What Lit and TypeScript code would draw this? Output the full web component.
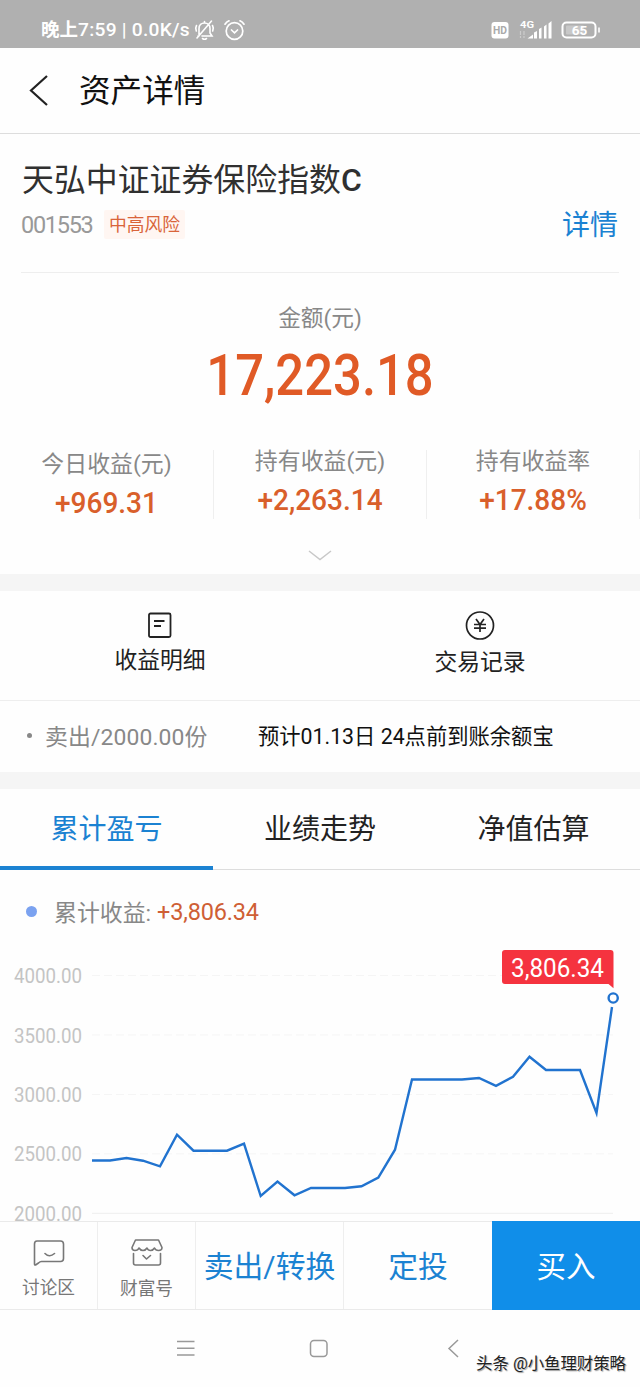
import { LitElement, html, svg, css } from "lit";
import { customElement } from "lit/decorators.js";

const TREND: [number, number][] = [
  [92, 1160.5], [110, 1160.5], [126.5, 1158], [143, 1160.7], [160, 1166.3], [177, 1134.7],
  [193.5, 1150.7], [227, 1150.7], [244, 1143.7], [260.7, 1196], [277.5, 1181.5], [294.5, 1195.3],
  [311, 1188], [345, 1188], [361.5, 1186.3], [378.3, 1177.5], [395, 1149.7], [412, 1079.5],
  [462, 1079.5], [479, 1078], [496, 1085.8], [513, 1076.8], [529.5, 1056.7], [546, 1070],
  [580, 1070], [596.5, 1113], [612, 1007],
];
const TICKS = [
  { label: "4000.00", y: 975.5 },
  { label: "3500.00", y: 1035 },
  { label: "3000.00", y: 1094.5 },
  { label: "2500.00", y: 1153.8 },
  { label: "2000.00", y: 1213.3 },
];

@customElement("status-bar")
class StatusBar extends LitElement {
  static styles = css`
    :host { display: flex; height: 48px; background: #b0b0b0; color: #fff; box-sizing: border-box; padding: 13px 39px 0 41px; justify-content: space-between; align-items: flex-start; }
    .left, .right { display: flex; align-items: center; height: 34px; }
    .time { font-size: 19.2px; font-weight: 500; line-height: 34px; white-space: pre; letter-spacing: 0.25px; }
    .cjk { font-size: 18.5px; letter-spacing: 0; font-weight: 600; }
    .mute { margin-left: 4px; }
    .alarm { margin-left: 9px; }
    svg { display: block; }
  `;
  render() {
    return html`
      <div class="left">
        <span class="time"><span class="cjk">晚上</span>7:59 | 0.0K/s</span>
        <svg class="mute" width="21" height="22" viewBox="0 0 21 22" fill="none" stroke="#fff" stroke-width="1.6" stroke-linecap="round">
          <path d="M5 15.500V9.500C5 6 7.500 4 10.500 4s5.500 2 5.500 5.500v4.500l2 3H8M4 17h1M10.500 4V2.500M8.500 19.500q2 1.500 4 0M3 19L17.500 2M2.500 6.500Q1 9 2.300 12M18.500 6.500Q20 9 18.700 12"/>
        </svg>
        <svg class="alarm" width="21" height="22" viewBox="0 0 21 22" fill="none" stroke="#fff" stroke-width="1.7" stroke-linecap="round">
          <circle cx="10.500" cy="12" r="8.300"/>
          <path d="M7.500 11l3 2.800 3-2.800M1 5.200Q2.500 2.800 5 1.800M20 5.200Q18.500 2.800 16 1.800"/>
        </svg>
      </div>
      <div class="right">
        <svg width="110" height="24" viewBox="0 0 110 24">
          <rect x="0.500" y="4" width="17" height="16.500" rx="3" fill="#fff"/>
          <text x="9" y="16.300" font-size="11" font-weight="700" fill="#aaa" text-anchor="middle" textLength="14" lengthAdjust="spacingAndGlyphs">HD</text>
          <text x="29" y="9.500" font-size="9.800" font-weight="700" fill="#fff" textLength="14" lengthAdjust="spacingAndGlyphs">4G</text>
          <path d="M29.500 13v7M33 13v7" stroke="#ccc" stroke-width="1.200" stroke-dasharray="4 1"/>
          <path d="M36.500 20.500l5.500-4v4zM43 20.500v-6l3-1.500v7.500zM48 20.500v-9.500l2.500-1.500v11zM53 20.500V8.500l2.500-2v14zM57.500 20.500V5.500l3-2.500v17.500z" fill="#fff"/>
          <rect x="71.500" y="4.500" width="33" height="15" rx="4" fill="none" stroke="#fff" stroke-width="2"/>
          <rect x="75" y="7.500" width="18" height="9" rx="1" fill="#c8c8c8"/>
          <path d="M108 9.500v5" stroke="#eee" stroke-width="2"/>
          <text x="88.500" y="16.800" font-size="13.500" font-weight="700" fill="#fff" text-anchor="middle">65</text>
        </svg>
      </div>`;
  }
}

@customElement("fund-summary")
class FundSummary extends LitElement {
  static styles = css`
    :host { display: block; height: 440px; box-sizing: border-box; padding-top: 23px; }
    .name { margin-left: 22px; font-size: 31.9px; line-height: 46px; color: #303030; white-space: nowrap; }
    .name b { font-weight: 500; }
    .meta { display: flex; align-items: center; height: 43px; margin: 0 22px 0 21px; }
    .code { font-size: 23.5px; color: #999; width: 83px; white-space: nowrap; letter-spacing: -1.3px; }
    .tag { background: #fff6f2; color: #d9643a; font-size: 17.8px; line-height: 29px; padding: 0 5px; border-radius: 2px; margin-top: -1px; }
    .more { margin-left: auto; font-size: 28px; color: #1b82d2; padding-bottom: 3px; }
    .rule { height: 1px; background: #eee; margin: 26px 21px 0; }
    .label { text-align: center; font-size: 22.7px; line-height: 34px; color: #888; margin-top: 29px; }
    .amount { text-align: center; font-size: 58px; line-height: 70px; font-weight: 500; color: #e05a26; margin-top: 4px; transform: scaleX(0.875); }
    .cols { display: grid; grid-template-columns: 214px 213px 213px; margin-top: 40px; height: 67px; }
    .col { border-right: 1px solid #efefef; text-align: center; white-space: nowrap; }
    .k { font-size: 22.9px; line-height: 28px; color: #888; margin-top: -2px; }
    .v { font-size: 29.5px; line-height: 38px; color: #d95f2b; margin-top: 5px; transform: scaleX(0.95); font-weight: 500; }
    .low { position: relative; top: 3px; }
    .arrow { display: block; margin: 32px auto 0; }
  `;
  render() {
    const cols = [
      { k: "今日收益(元)", v: "+969.31", low: true },
      { k: "持有收益(元)", v: "+2,263.14", low: false },
      { k: "持有收益率", v: "+17.88%", low: false },
    ];
    return html`
      <div class="name">天弘中证证券保险指数<b>C</b></div>
      <div class="meta"><span class="code">001553</span><span class="tag">中高风险</span><span class="more">详情</span></div>
      <div class="rule"></div>
      <div class="label">金额(元)</div>
      <div class="amount">17,223.18</div>
      <div class="cols">
        ${cols.map((c) => html`<div class="col"><div class=${c.low ? "low" : ""}><div class="k">${c.k}</div><div class="v">${c.v}</div></div></div>`)}
      </div>
      <svg class="arrow" width="24" height="12" viewBox="0 0 24 12" fill="none" stroke="#c8c8c8" stroke-width="1.500"><path d="M1 2l11 8.500L23 2"/></svg>`;
  }
}

@customElement("fund-actions")
class FundActions extends LitElement {
  static styles = css`
    :host { display: block; border-top: 17px solid #f5f5f5; border-bottom: 17px solid #f5f5f5; }
    .pair { display: grid; grid-template-columns: 1fr 1fr; height: 109px; border-bottom: 1px solid #eee; }
    .item { display: flex; flex-direction: column; align-items: center; padding-top: 19px; font-size: 22.8px; line-height: 32px; color: #222; gap: 5px; }
    .item.r { gap: 7px; }
    .order { display: flex; align-items: center; height: 71px; white-space: nowrap; }
    .bullet { width: 5px; height: 5px; border-radius: 50%; background: #888; margin-left: 27px; margin-bottom: 2px; }
    .sell { color: #888; font-size: 22.9px; margin-left: 13px; width: 213px; letter-spacing: 0.1px; padding-bottom: 4px; }
    .eta { color: #111; font-size: 21.3px; padding-bottom: 4px; }
  `;
  render() {
    return html`
      <div class="pair">
        <div class="item">
          <svg width="30" height="30" viewBox="0 0 30 30" fill="none" stroke="#222" stroke-width="1.800"><rect x="4" y="3.500" width="21.500" height="23.500" rx="1.500"/><path d="M9 11h10.500M9 16h7"/></svg>
          收益明细
        </div>
        <div class="item r">
          <svg width="30" height="30" viewBox="0 0 30 30" fill="none" stroke="#222" stroke-width="1.700"><circle cx="15" cy="15.500" r="13.500"/><path d="M11 9l4 5.500 4-5.500M9 14.500h12M9 18.200h12M15 14.500v7.500"/></svg>
          交易记录
        </div>
      </div>
      <div class="order"><span class="bullet"></span><span class="sell">卖出/2000.00份</span><span class="eta">预计01.13日 24点前到账余额宝</span></div>`;
  }
}

@customElement("profit-chart")
class ProfitChart extends LitElement {
  static styles = css`
    :host { display: block; height: 432px; }
    .tabs { display: grid; grid-template-columns: 213px 214px 213px; height: 81px; box-sizing: border-box; border-bottom: 1px solid #ddd; }
    .tab { text-align: center; font-size: 28px; line-height: 81px; height: 77px; color: #222; }
    .on { color: #1b82d2; border-bottom: 4px solid #1b82d2; }
    .legend { display: flex; align-items: center; height: 84px; padding-left: 26px; font-size: 22.9px; color: #888; white-space: pre; }
    .dot { width: 11px; height: 11px; border-radius: 50%; background: #7ba2f0; margin-right: 17px; margin-bottom: 1px; }
    .key { padding-bottom: 3px; }
    .num { color: #cf5f35; margin-left: 6px; font-size: 23.5px; letter-spacing: -0.2px; padding-bottom: 1px; }
    svg { display: block; margin-top: -14px; overflow: visible; }
  `;
  render() {
    return html`
      <div class="tabs"><div class="tab on">累计盈亏</div><div class="tab">业绩走势</div><div class="tab">净值估算</div></div>
      <div class="legend"><span class="dot"></span><span class="key">累计收益:</span><span class="num">+3,806.34</span></div>
      <svg width="640" height="281" viewBox="0 940 640 281">
        ${TICKS.map((t, i) => svg`
          <line x1="92" x2="613" y1=${t.y} y2=${t.y} stroke=${i === 4 ? "#eeeeee" : "#f5f5f5"} stroke-dasharray=${i === 4 ? "none" : "8 4"}/>
          <text x="14" y=${t.y + 7.5} font-size="20.500" fill="#c4c4c4" textLength="68" lengthAdjust="spacingAndGlyphs">${t.label}</text>`)}
        <polyline points=${TREND.map((p) => p.join(",")).join(" ")} fill="none" stroke="#2173cf" stroke-width="2.400"/>
        <circle cx="613.200" cy="998" r="4.600" fill="#fff" stroke="#2173cf" stroke-width="2.400"/>
        <path d="M505 950h105.500q3 0 3 3v35.300l-5-4.300H505q-3 0-3-3v-28q0-3 3-3z" fill="#f5333f"/>
        <text x="511" y="977" font-size="25" fill="#fff" textLength="93" lengthAdjust="spacingAndGlyphs">3,806.34</text>
      </svg>`;
  }
}

@customElement("trade-bar")
class TradeBar extends LitElement {
  static styles = css`
    :host { display: grid; grid-template-columns: 98px 98px 148px 148px 148px; height: 89px; box-sizing: border-box; border-top: 1px solid #eaeaea; border-bottom: 1px solid #eaeaea; }
    .cell { border-right: 1px solid #eee; display: flex; align-items: center; justify-content: center; font-size: 29.8px; color: #1b82d2; white-space: nowrap; padding-bottom: 4px; }
    .small { flex-direction: column; justify-content: flex-start; font-size: 17.7px; line-height: 26px; color: #777; padding: 16px 0 0; gap: 9px; }
    .small.s2 { gap: 10px; }
    .plain { border-right: 0; }
    .buy { background: #108ee9; color: #fff; border: 0; margin: -1px 0; font-size: 29.5px; }
    svg { display: block; }
  `;
  render() {
    return html`
      <div class="cell small">
        <svg width="32" height="28" viewBox="0 0 32 28" fill="none" stroke="#777" stroke-width="1.600" stroke-linejoin="round" stroke-linecap="round"><path d="M4 3h23.500q3 0 3 3v14.500q0 3-3 3H8.500q-1.500 0-3 1.500l-3 2q-1 .300-1-1V6q0-3 2.500-3zM12 15.500q4.500 4.500 9.500 0"/></svg>
        讨论区
      </div>
      <div class="cell small s2">
        <svg width="32" height="28" viewBox="0 0 32 28" fill="none" stroke="#777" stroke-width="1.600" stroke-linejoin="round" stroke-linecap="round"><path d="M4.500 2h23L31 9.500q0 3-3.500 3-3 0-4-2.500-1.500 2.500-4 2.500T16 10q-1.500 2.500-4 2.500T8 10q-1 2.500-4 2.500-3 0-3-3zM2.500 15.500V25q0 2 2 2h23q2 0 2-2v-9.500M12 17.500l3.500 3.500 4-3.500"/></svg>
        财富号
      </div>
      <div class="cell">卖出/转换</div>
      <div class="cell plain">定投</div>
      <div class="cell buy">买入</div>`;
  }
}

@customElement("system-nav")
class SystemNav extends LitElement {
  static styles = css`
    :host { display: block; height: 77px; position: relative; }
    svg { display: block; }
    .mark { position: absolute; right: 14px; top: 42px; font-size: 16.400px; line-height: 24px; color: #222; text-shadow: -1px -1px 0 #fff, 1px 1px 1px #999; white-space: nowrap; }
  `;
  render() {
    return html`
      <svg width="640" height="77" viewBox="0 1310 640 77" fill="none" stroke="#999" stroke-width="1.500">
        <path d="M177 1341.500h17.500M177 1348.300h17.500M177 1355h17.500"/>
        <rect x="310.500" y="1340.500" width="16.500" height="16" rx="3.500"/>
        <path d="M458 1340l-9 8.500 9 8.500"/>
      </svg>
      <div class="mark">头条 @小鱼理财策略</div>`;
  }
}

@customElement("app-root")
class AppRoot extends LitElement {
  static styles = css`
    :host { display: block; width: 640px; height: 1387px; overflow: hidden; background: #fefefe; font-family: Roboto, "Noto Sans CJK SC", sans-serif; }
    .head { display: flex; align-items: center; height: 85px; border-bottom: 1px solid #ddd; padding-left: 29px; font-size: 31.6px; color: #111; }
    .back { display: block; margin-right: 30px; }
    .title { padding-bottom: 5px; }
  `;
  render() {
    return html`
      <status-bar></status-bar>
      <div class="head">
        <svg class="back" width="20" height="32" viewBox="0 0 20 32" fill="none" stroke="#222" stroke-width="2.200"><path d="M18 1L2 15.500 18 30"/></svg><span class="title">资产详情</span>
      </div>
      <fund-summary></fund-summary>
      <fund-actions></fund-actions>
      <profit-chart></profit-chart>
      <trade-bar></trade-bar>
      <system-nav></system-nav>`;
  }
}
